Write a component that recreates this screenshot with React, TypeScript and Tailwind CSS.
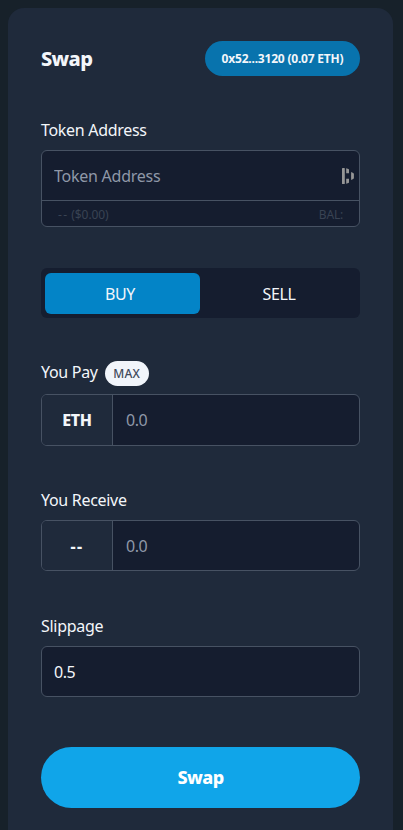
import React from "react";

function Label({ children }: { children: React.ReactNode }) {
  return <span className="text-[16px] leading-6 tracking-[-0.3px] whitespace-nowrap">{children}</span>;
}

function AmountInput({ unit, height, unitSpacing }: { unit: string; height: string; unitSpacing: string }) {
  return (
    <div className={`flex overflow-hidden rounded-md border border-[#475263] bg-[#151d2f] ${height}`}>
      <div
        className={`flex w-[71px] shrink-0 items-center justify-center border-r border-[#475263] bg-[#1f2a3b] text-[16px] font-extrabold ${unitSpacing}`}
      >
        {unit}
      </div>
      <input
        className="w-full min-w-0 bg-transparent px-[13px] text-[16px] tracking-[-0.5px] outline-none placeholder:text-[#8f98a8]"
        placeholder="0.0"
      />
    </div>
  );
}

function FieldIcon() {
  return (
    <svg width="12" height="16" viewBox="0 0 12 16" fill="#969696" className="mr-[5px] shrink-0">
      <rect x="0" y="0" width="2.8" height="16" rx="0.6" />
      <path d="M4.2 0.3L6.4 0.9Q7 1.1 7 1.7V5.2H4.2Z" />
      <path d="M4.2 10.8H7V14.3Q7 14.9 6.4 15.1L4.2 15.8Z" />
      <path d="M9.1 4L11.2 5Q11.9 5.4 11.9 6V10Q11.9 10.7 11.2 11.1L9.1 12.1Z" />
    </svg>
  );
}

export default function App() {
  return (
    <div className="h-[830px] overflow-hidden bg-[#17212a] pt-2 pr-[10px] pl-2 font-['Noto_Sans','Open_Sans',sans-serif] text-[#f3f6fa]">
      <div className="flex h-[840px] flex-col rounded-t-2xl bg-[#1f2a3b] px-[33px] pt-[33px]">
        <header className="flex h-[35px] items-center justify-between">
          <h1 className="text-[20px] font-extrabold tracking-[-0.65px]">Swap</h1>
          <button className="h-[35px] w-[155px] rounded-full bg-[#0873ad] text-[12px] font-bold tracking-[-0.2px] whitespace-nowrap">
            0x52...3120 (0.07 ETH)
          </button>
        </header>

        <section className="mt-[42px] flex flex-col">
          <Label>Token Address</Label>
          <div className="mt-2 h-[77px] rounded-md border border-[#475263] bg-[#151d2f]">
            <div className="flex h-[50px] items-center border-b border-[#475263]">
              <input
                className="min-w-0 flex-1 bg-transparent pl-3 text-[16px] tracking-[-0.25px] outline-none placeholder:text-[#8f98a8]"
                placeholder="Token Address"
              />
              <FieldIcon />
            </div>
            <div className="flex h-[25px] items-center justify-between px-4 pt-[2px] text-[12px] text-[#394353]">
              <span>
                <span className="tracking-[1.3px]">--</span>
                <span className="tracking-[-0.1px]"> ($0.00)</span>
              </span>
              <span className="tracking-[-0.2px]">BAL:</span>
            </div>
          </div>
        </section>

        <div className="mt-[41px] flex h-[50px] rounded-md bg-[#151d2f] px-1 pt-[5px] pb-1 text-[16px] tracking-[-0.4px]">
          <button className="w-[155px] rounded-md bg-[#0384c7] pr-[5px]">BUY</button>
          <button className="flex-1 pl-[2px]">SELL</button>
        </div>

        <section className="mt-[43px] flex flex-col">
          <div className="flex h-[25px] items-center gap-[7px]">
            <div className="-mt-[3px]">
              <Label>You Pay</Label>
            </div>
            <button className="h-[25px] w-11 rounded-full bg-[#f1f5fb] text-[12px] font-medium tracking-[0.3px] text-[#3f4a5c]">
              MAX
            </button>
          </div>
          <div className="mt-2">
            <AmountInput unit="ETH" height="h-[52px]" unitSpacing="tracking-[-0.3px]" />
          </div>
        </section>

        <section className="mt-[42px] flex flex-col">
          <Label>You Receive</Label>
          <div className="mt-2">
            <AmountInput unit="--" height="h-[51px]" unitSpacing="tracking-[1.5px]" />
          </div>
        </section>

        <section className="mt-[43px] flex flex-col">
          <Label>Slippage</Label>
          <input
            className="mt-2 h-[51px] rounded-md border border-[#475263] bg-[#151d2f] px-3 text-[16px] tracking-[-0.5px] outline-none"
            defaultValue="0.5"
          />
        </section>

        <button className="mt-[50px] h-[61px] shrink-0 rounded-full bg-[#10a5e9] text-[18px] font-extrabold tracking-[-0.6px] text-white">
          Swap
        </button>
      </div>
    </div>
  );
}
